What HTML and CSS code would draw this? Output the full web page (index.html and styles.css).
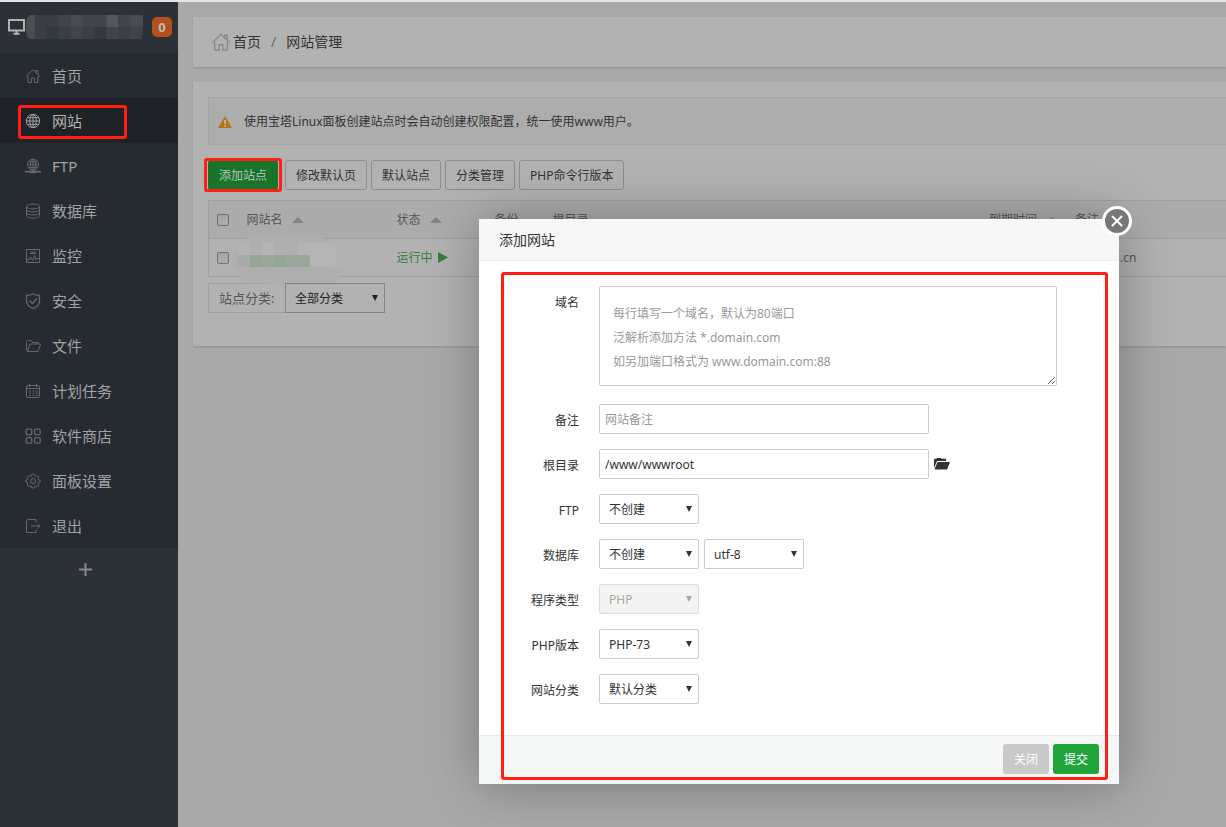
FILE: index.html
```html
<!DOCTYPE html>
<html lang="zh-CN">
<head>
<meta charset="utf-8">
<title>网站管理</title>
<link rel="stylesheet" href="styles.css">
</head>
<body>
<svg class="defs" aria-hidden="true">
  <symbol id="i-home" viewBox="0 0 16 16"><path d="M1 8.5 8 1.8l7 6.7M3 8v6.5h3.5V10h3v4.500H13V8M11 4.300V2.500h2V6"/></symbol>
  <symbol id="i-globe" viewBox="0 0 16 16"><circle cx="8" cy="8" r="6.700"/><ellipse cx="8" cy="8" rx="3.200" ry="6.700"/><path d="M8 1.300v13.400M1.300 8h13.400M2.500 4.700h11M2.500 11.300h11"/></symbol>
</svg>
<div class="app">
  <aside class="sidebar">
    <div class="host">
      <svg class="monitor" viewBox="0 0 17 16"><path d="M1 1h15v10.500H1zM8.500 12v2M5.500 14.700h6"/></svg>
      <svg class="mosaic" viewBox="0 0 118 24" preserveAspectRatio="none">
        <rect width="118" height="24" rx="5" fill="#3a3f44"/>
        <path fill="#4a4e53" d="M4 0h5v24H4Q0 20 0 12T4 0"/>
        <path fill="#414549" d="M33 0h12v12H33zM57 0h24v12H57zM93 0h12v12H93zM45 12h12v12H45z"/>
        <path fill="#484c50" d="M45 0h12v12H45zM105 0h13v12h-13z"/>
        <path fill="#53575b" d="M81 0h12v12H81z"/>
        <path fill="#34393f" d="M21 12h12v12H21zM69 12h12v12H69z"/>
        <path fill="#404448" d="M81 12h12v12H81zM105 12h12v12h-12z"/>
      </svg>
      <span class="badge">0</span>
    </div>
    <nav class="nav">
      <a href="#"><svg viewBox="0 0 16 16"><use href="#i-home"/></svg>首页</a>
      <a href="#" class="active"><svg viewBox="0 0 16 16"><use href="#i-globe"/></svg>网站<span class="mark mark-nav"></span></a>
      <a href="#"><svg viewBox="0 0 16 16"><circle cx="8" cy="6.700" r="5.500"/><ellipse cx="8" cy="6.700" rx="2.600" ry="5.500"/><path d="M8 1.200v11M2.500 6.700h11M3.500 4h9M3.500 9.400h9"/><path stroke-width="1.800" d="M0 13.700h16M5.500 14.300h5"/></svg>FTP</a>
      <a href="#"><svg viewBox="0 0 16 16"><ellipse cx="8" cy="3.500" rx="6.500" ry="2.500"/><path d="M1.500 3.500v9C1.500 16 14.500 16 14.500 12.500v-9M1.500 6.500c0 3.300 13 3.300 13 0M1.500 9.500c0 3.300 13 3.300 13 0"/></svg>数据库</a>
      <a href="#"><svg viewBox="0 0 16 16"><path d="M1.500 1.500h13v13h-13zM5 4h6M5 5.500h6M2 12h2l1.500-3 2 3.500 2-5 1.500 4.500 1-1.500h2"/></svg>监控</a>
      <a href="#"><svg viewBox="0 0 16 16"><path stroke-width="1.300" d="M8 .8c2 1.500 4 1.700 6.500 1.700V8c0 3.500-3 6-6.500 7.400C4.500 14 1.500 11.500 1.500 8V2.500C4 2.500 6 2.300 8 .8zM4.500 7.500l3 3 4.500-5"/></svg>安全</a>
      <a href="#"><svg viewBox="0 0 16 16"><path d="M3 13.500 1.500 12V3.500l1-1H6l1.500 2H13V6M2.500 13.500 5 6h10.500L13 13.500z"/></svg>文件</a>
      <a href="#"><svg viewBox="0 0 16 16"><rect x="1.500" y="2.500" width="13" height="12" rx="1.500"/><path d="M1.500 5.500h13M4.500 1v3M11.500 1v3"/><path stroke-dasharray="2 1.500" d="M4 8h9M4 10.200h9M4 12.400h9"/></svg>计划任务</a>
      <a href="#"><svg viewBox="0 0 16 16"><g stroke-width="1.300"><rect x="1.200" y="1.200" width="5.600" height="5.600" rx="1.300"/><rect x="9.600" y="1.200" width="5.600" height="5.600" rx="1.300"/><rect x="1.200" y="9.600" width="5.600" height="5.600" rx="1.300"/><rect x="9.600" y="9.600" width="5.600" height="5.600" rx="1.300"/></g></svg>软件商店</a>
      <a href="#"><svg viewBox="0 0 16 16"><circle cx="8" cy="8" r="2.500"/><path d="M6.800 1.200h2.400l.4 1.700 1.200.5 1.500-.9 1.600 1.600-.8 1.500.5 1.200 1.600.4v1.700l-1.600.5-.5 1.200.8 1.500-1.600 1.600-1.500-.9-1.200.5-.4 1.600H6.800l-.4-1.600-1.200-.5-1.500.9-1.600-1.600.8-1.500-.5-1.200-1.600-.5V7.200l1.600-.4.500-1.200-.8-1.500 1.600-1.600 1.500.9 1.200-.5z"/></svg>面板设置</a>
      <a href="#"><svg viewBox="0 0 16 16"><path d="M11 4.500v-3H2.500L1.500 3v11.500H11v-3M6 8h9M12.500 5.500 15 8l-2.500 2.500"/></svg>退出</a>
    </nav>
    <button class="add-menu" aria-label="添加菜单"><svg viewBox="0 0 13 13"><path d="M6.500 0v13M0 6.500h13"/></svg></button>
  </aside>

  <main class="main">
    <div class="panel crumbs">
      <svg class="home" viewBox="0 0 16 16"><use href="#i-home"/></svg><a href="#">首页</a><span class="slash">/</span><span>网站管理</span>
    </div>
    <section class="panel content">
      <div class="notice">
        <svg viewBox="0 0 14 12"><path fill="#b47515" d="M7 0l7 12H0z"/><path fill="#bfbfbf" d="M6.200 4h1.600v4H6.200zM6.200 9h1.600v1.500H6.200z"/></svg>
        使用宝塔Linux面板创建站点时会自动创建权限配置，统一使用www用户。
      </div>
      <div class="toolbar">
        <button class="btn btn-add">添加站点<span class="mark mark-add"></span></button>
        <button class="btn">修改默认页</button>
        <button class="btn">默认站点</button>
        <button class="btn">分类管理</button>
        <button class="btn">PHP命令行版本</button>
      </div>
      <table class="sites">
        <colgroup><col class="c-check"><col class="c-name"><col class="c-state"><col class="c-backup"><col><col class="c-expire"><col class="c-note"></colgroup>
        <thead>
          <tr><th><input type="checkbox" aria-label="全选"></th><th>网站名<i class="sort"></i></th><th>状态<i class="sort"></i></th><th>备份</th><th>根目录</th><th>到期时间<i class="sort"></i></th><th>备注</th></tr>
        </thead>
        <tbody>
          <tr>
            <td><input type="checkbox" aria-label="选择网站"></td>
            <td class="masked"><svg class="smudge" viewBox="0 0 112 50"><path fill="#afafaf" d="M15 2Q50-3 90 2l14 5H98v26h14q0 7-14 13-40 5-80 0Q0 39 0 22 1 8 15 2"/><path fill="#b4b4b4" d="M6 7h12v12H6zM30 7h12v12H30zM66 7h38v24H66z"/><path fill="#a8aaa8" d="M6 19h12v12H6z"/><path fill="#94a696" d="M18 19h12v12H18zM42 19h12v12H42z"/><path fill="#9aa79b" d="M30 19h12v12H30zM54 19h24v12H54z"/></svg></td>
            <td class="running">运行中<svg viewBox="0 0 10 11"><path d="M0 0l10 5.500L0 11z"/></svg></td>
            <td></td><td></td><td></td><td class="note">.cn</td>
          </tr>
        </tbody>
      </table>
      <div class="filter">
        <label for="cate">站点分类:</label>
        <span class="select"><select id="cate"><option>全部分类</option></select></span>
      </div>
    </section>
  </main>
</div>

<form class="modal" role="dialog" aria-labelledby="dlg-title">
  <h2 id="dlg-title">添加网站</h2>
  <button type="button" class="close" aria-label="关闭窗口"><svg viewBox="0 0 12 12"><path d="M1.500 1.500l9 9M10.500 1.500l-9 9"/></svg></button>
  <div class="fields">
    <div class="row row-domain"><label for="domain">域名</label><textarea id="domain" placeholder="每行填写一个域名，默认为80端口&#10;泛解析添加方法 *.domain.com&#10;如另加端口格式为 www.domain.com:88"></textarea></div>
    <div class="row"><label for="remark">备注</label><input id="remark" type="text" placeholder="网站备注"></div>
    <div class="row"><label for="root">根目录</label><input id="root" type="text" value="/www/wwwroot"><button type="button" class="folder" aria-label="选择目录"><svg viewBox="0 0 16 12"><path d="M0 10V1.500L.8.800h1.500L3 0h4l.8.800H12V3H3z"/><path d="M3.500 4H16l-3 7.500H.5z"/></svg></button></div>
    <div class="row"><label for="ftp">FTP</label><span class="select"><select id="ftp"><option>不创建</option></select></span></div>
    <div class="row"><label for="db">数据库</label><span class="select"><select id="db"><option>不创建</option></select></span><span class="select"><select aria-label="编码"><option>utf-8</option></select></span></div>
    <div class="row"><label for="type">程序类型</label><span class="select off"><select id="type" disabled><option>PHP</option></select></span></div>
    <div class="row"><label for="php">PHP版本</label><span class="select"><select id="php"><option>PHP-73</option></select></span></div>
    <div class="row"><label for="group">网站分类</label><span class="select"><select id="group"><option>默认分类</option></select></span></div>
  </div>
  <div class="actions">
    <button type="button" class="cancel">关闭</button>
    <button type="submit" class="submit">提交</button>
  </div>
  <span class="mark mark-form"></span>
</form>
</body>
</html>
```
FILE: styles.css
```css
* { box-sizing: border-box; }
body {
  margin: 0;
  background: #a9a9a9;
  color: #333;
  font: 12px/20px "Noto Sans", "Noto Sans CJK SC", sans-serif;
  overflow: hidden;
}
button, input, select, textarea { font: inherit; color: inherit; margin: 0; }
a { color: inherit; text-decoration: none; }
.defs { position: absolute; width: 0; height: 0; }
.app { display: flex; min-height: 100vh; border-top: 2px solid #e4e4e4; }

/* sidebar */
.sidebar { flex: 0 0 178px; background: #2c3138; }
.host { display: flex; align-items: center; height: 51px; padding: 0 6px 2px 8px; }
.monitor { width: 17px; height: 16px; margin-right: 1px; fill: none; stroke: #b2b2b2; stroke-width: 2; }
.mosaic { width: 117px; height: 24px; }
.badge {
  width: 20px;
  margin-left: auto;
  border-radius: 5px;
  background: #b3501d;
  color: #bababa;
  font-size: 13px;
  font-weight: 700;
  text-align: center;
}
.nav { background: #262b31; }
.nav a {
  position: relative;
  display: flex;
  align-items: center;
  gap: 11px;
  height: 45px;
  padding-left: 25px;
  color: #a0a2a4;
  font-size: 15px;
}
.nav svg { width: 16px; height: 16px; fill: none; stroke: #65686b; }
.nav .active { background: #1f2226; color: #b4b4b4; }
.nav .active svg { stroke: #a0a0a0; }
.add-menu { display: block; width: 100%; height: 42px; padding: 0 0 0 79px; border: 0; background: none; }
.add-menu svg { display: block; width: 13px; height: 13px; fill: none; stroke: #858789; stroke-width: 2; }

/* page */
.main { flex: 1; min-width: 0; padding: 15px 0 0 15px; }
.panel { background: #b2b2b2; box-shadow: 0 1px 2px rgba(0, 0, 0, .15); }
.crumbs { display: flex; align-items: center; height: 50px; margin-bottom: 15px; padding-left: 18px; font-size: 14px; }
.home { width: 20px; height: 20px; margin-right: 2px; fill: none; stroke: #858585; }
.slash { margin: 0 10px; color: #666; }
.content { padding: 15px 0 33px 15px; }
.notice {
  display: flex;
  align-items: center;
  gap: 12px;
  height: 48px;
  padding: 2px 0 0 9px;
  border: 1px solid #a4a4a4;
  border-right: 0;
  background: #adadad;
}
.notice svg { width: 14px; height: 12px; }
.toolbar { display: flex; gap: 4px; margin: 15px 0 10px; }
.btn {
  height: 30px;
  padding: 2px 10px 0;
  border: 1px solid #8e8e8e;
  border-radius: 3px;
  background: #b2b2b2;
}
.btn-add { position: relative; margin-right: 3px; border-color: #17742a; background: #17742a; color: #b8c4ba; }
.sites { width: 100%; border-collapse: collapse; table-layout: fixed; border: 1px solid #a0a0a0; border-right: 0; color: #555; }
.sites tr { height: 38px; border-bottom: 1px solid #a0a0a0; }
.sites thead { background: #acacac; }
.sites th, .sites td { padding: 0; font-weight: 400; text-align: left; }
.c-check { width: 38px; }
.c-name { width: 150px; }
.c-state { width: 98px; }
.c-backup { width: 58px; }
.c-expire { width: 86px; }
.c-note { width: 151px; }
.sites input {
  display: block;
  width: 12px;
  height: 12px;
  margin-left: 8px;
  appearance: none;
  border: 1px solid #6f6f6f;
  border-radius: 2px;
  background: linear-gradient(#a4a4a4, #aeaeae);
}
.sort { display: inline-block; margin-left: 9px; border: 6px solid transparent; border-top: 0; border-bottom-color: #828282; vertical-align: 1px; }
.masked { position: relative; }
.smudge { position: absolute; left: -15px; top: -3px; width: 112px; height: 50px; }
.running { color: #367c3f; }
.running svg { width: 10px; height: 11px; margin-left: 5px; vertical-align: -1px; fill: #367c3f; }
.sites .note { padding-left: 45px; }

.select { position: relative; display: block; width: 100px; height: 30px; line-height: 20px; }
.select select {
  width: 100%;
  height: 100%;
  padding: 1px 20px 0 9px;
  appearance: none;
  border: 1px solid #ccc;
  border-radius: 2px;
  background: #fff;
}
.select::after {
  content: "";
  position: absolute;
  top: 12px;
  right: 7px;
  border: 3px solid transparent;
  border-top: 6px solid currentColor;
  border-bottom: 0;
  pointer-events: none;
}
.off { color: #aca899; }
.off select { border-color: #ddd; background: #f3f3f3; opacity: 1; }

.filter { display: flex; width: 177px; height: 30px; margin-top: 6px; border: 1px solid #a0a0a0; border-right: 0; font-size: 13px; line-height: 28px; color: #555; }
.filter label { flex: 1; padding-left: 10px; }
.filter .select { margin: -1px 0; font-size: 12px; color: #222; }
.filter .select select { border-color: #848484; border-radius: 0; background: #b2b2b2; }

/* dialog */
.modal {
  position: absolute;
  left: 479px;
  top: 219px;
  width: 640px;
  background: #fefefe;
  box-shadow: 1px 1px 50px rgba(0, 0, 0, .3);
}
.modal h2 { margin: 0; height: 42px; padding-left: 20px; border-bottom: 1px solid #eee; background: #f7f7f7; font-size: 14px; font-weight: 400; line-height: 41px; }
.close {
  position: absolute;
  right: -13px;
  top: -13px;
  display: grid;
  place-items: center;
  width: 30px;
  height: 30px;
  padding: 0;
  border: 3px solid #fff;
  border-radius: 50%;
  background: #777;
}
.close svg { width: 12px; height: 12px; fill: none; stroke: #fff; stroke-width: 2; stroke-linecap: round; }
.fields { display: grid; gap: 15px; padding: 25px 0 31px; }
.row { display: flex; gap: 5px; }
.row label { width: 100px; margin-right: 15px; padding-top: 7px; text-align: right; }
.row-domain { margin-bottom: 3px; }
.row label { height: 30px; }
.row input { width: 330px; height: 30px; padding: 1px 5px 0; border: 1px solid #ccc; border-radius: 2px; background: #fff; }
.row textarea { width: 458px; height: 100px; padding: 15px 13px 0; border: 1px solid #ccc; border-radius: 2px; background: #fff; line-height: 24px; }
.row ::placeholder { color: #999; opacity: 1; }
.folder { display: grid; place-items: center; padding: 0; border: 0; background: none; }
.folder svg { width: 16px; height: 12px; fill: #333; }
.actions { display: flex; justify-content: flex-end; gap: 4px; padding: 8px 20px 10px; border-top: 1px solid #eaeaea; background: #f5f7f6; }
.actions button { width: 46px; height: 30px; padding: 2px 0 0; border: 0; border-radius: 3px; color: #fff; }
.actions .cancel { background: #c9c9c9; }
.actions .submit { background: #20a53a; }

/* highlight frames */
.mark { position: absolute; border: 3px solid #ff2012; border-radius: 3px; pointer-events: none; }
.mark-nav { left: 18px; top: 7px; width: 109px; height: 34px; }
.mark-add { inset: -3px -5px -3px -5px; }
.mark-form { inset: 53px 11px 4px 22px; }
```
